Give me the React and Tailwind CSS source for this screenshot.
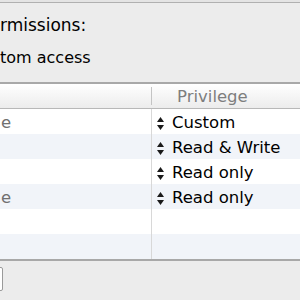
export default function App() {
  const rows = [
    { name: "e", priv: "Custom" },
    { name: "", priv: "Read & Write" },
    { name: "", priv: "Read only" },
    { name: "e", priv: "Read only" },
    { name: "", priv: "" },
    { name: "", priv: "" },
  ];
  const Arrows = () => (
    <svg width="7" height="13" viewBox="0 0 7 13" className="shrink-0">
      <polygon points="3.5,0 7,5 0,5" fill="#1a1a1a" />
      <polygon points="0,8 7,8 3.5,13" fill="#1a1a1a" />
    </svg>
  );
  return (
    <div
      className="w-[300px] h-[300px] overflow-hidden bg-[#ececec] flex flex-col"
      style={{ fontFamily: '"DejaVu Sans", "Liberation Sans", sans-serif' }}
    >
      <div className="h-[2px] bg-[#e4e4e4]" />
      <div className="h-[1px] bg-[#b0b0b0]" />
      <div className="h-[79px] flex flex-col text-black leading-none">
        <div className="mt-[14px] text-[17px]">rmissions:</div>
        <div className="mt-[16px] text-[16px]">tom access</div>
      </div>
      <div className="h-[2px] bg-[#a8a8a8]" />
      <div className="h-[25px] bg-gradient-to-b from-white to-[#ececec] flex items-center border-b border-[#b8b8b8]">
        <div className="w-[152px] h-[18px] border-r border-[#c4c4c4]" />
        <div className="pl-[25px] pt-[2px] text-[16.5px] text-[#7e7e7e] leading-none">Privilege</div>
      </div>
      <div className="flex flex-col">
        {rows.map((r, i) => (
          <div
            key={i}
            className={`h-[25px] flex ${i % 2 === 1 ? "bg-[#f1f4f9]" : "bg-white"}`}
          >
            <div className="w-[152px] border-r border-[#d8d8d8] flex items-center text-[16.5px] text-[#707070] pl-[1px] pt-[3px]">
              {r.name}
            </div>
            <div className="flex items-center pl-[5px] gap-[8px] text-[16.5px] text-black pt-[3px]">
              {r.priv && <Arrows />}
              {r.priv}
            </div>
          </div>
        ))}
      </div>
      <div className="h-[2px] bg-[#a8a8a8]" />
      <div className="flex-1 pt-[6px]">
        <div className="w-[4px] h-[24px] bg-white border border-[#9a9a9a] rounded-r-[2px] ml-[-1px]" />
      </div>
    </div>
  );
}
